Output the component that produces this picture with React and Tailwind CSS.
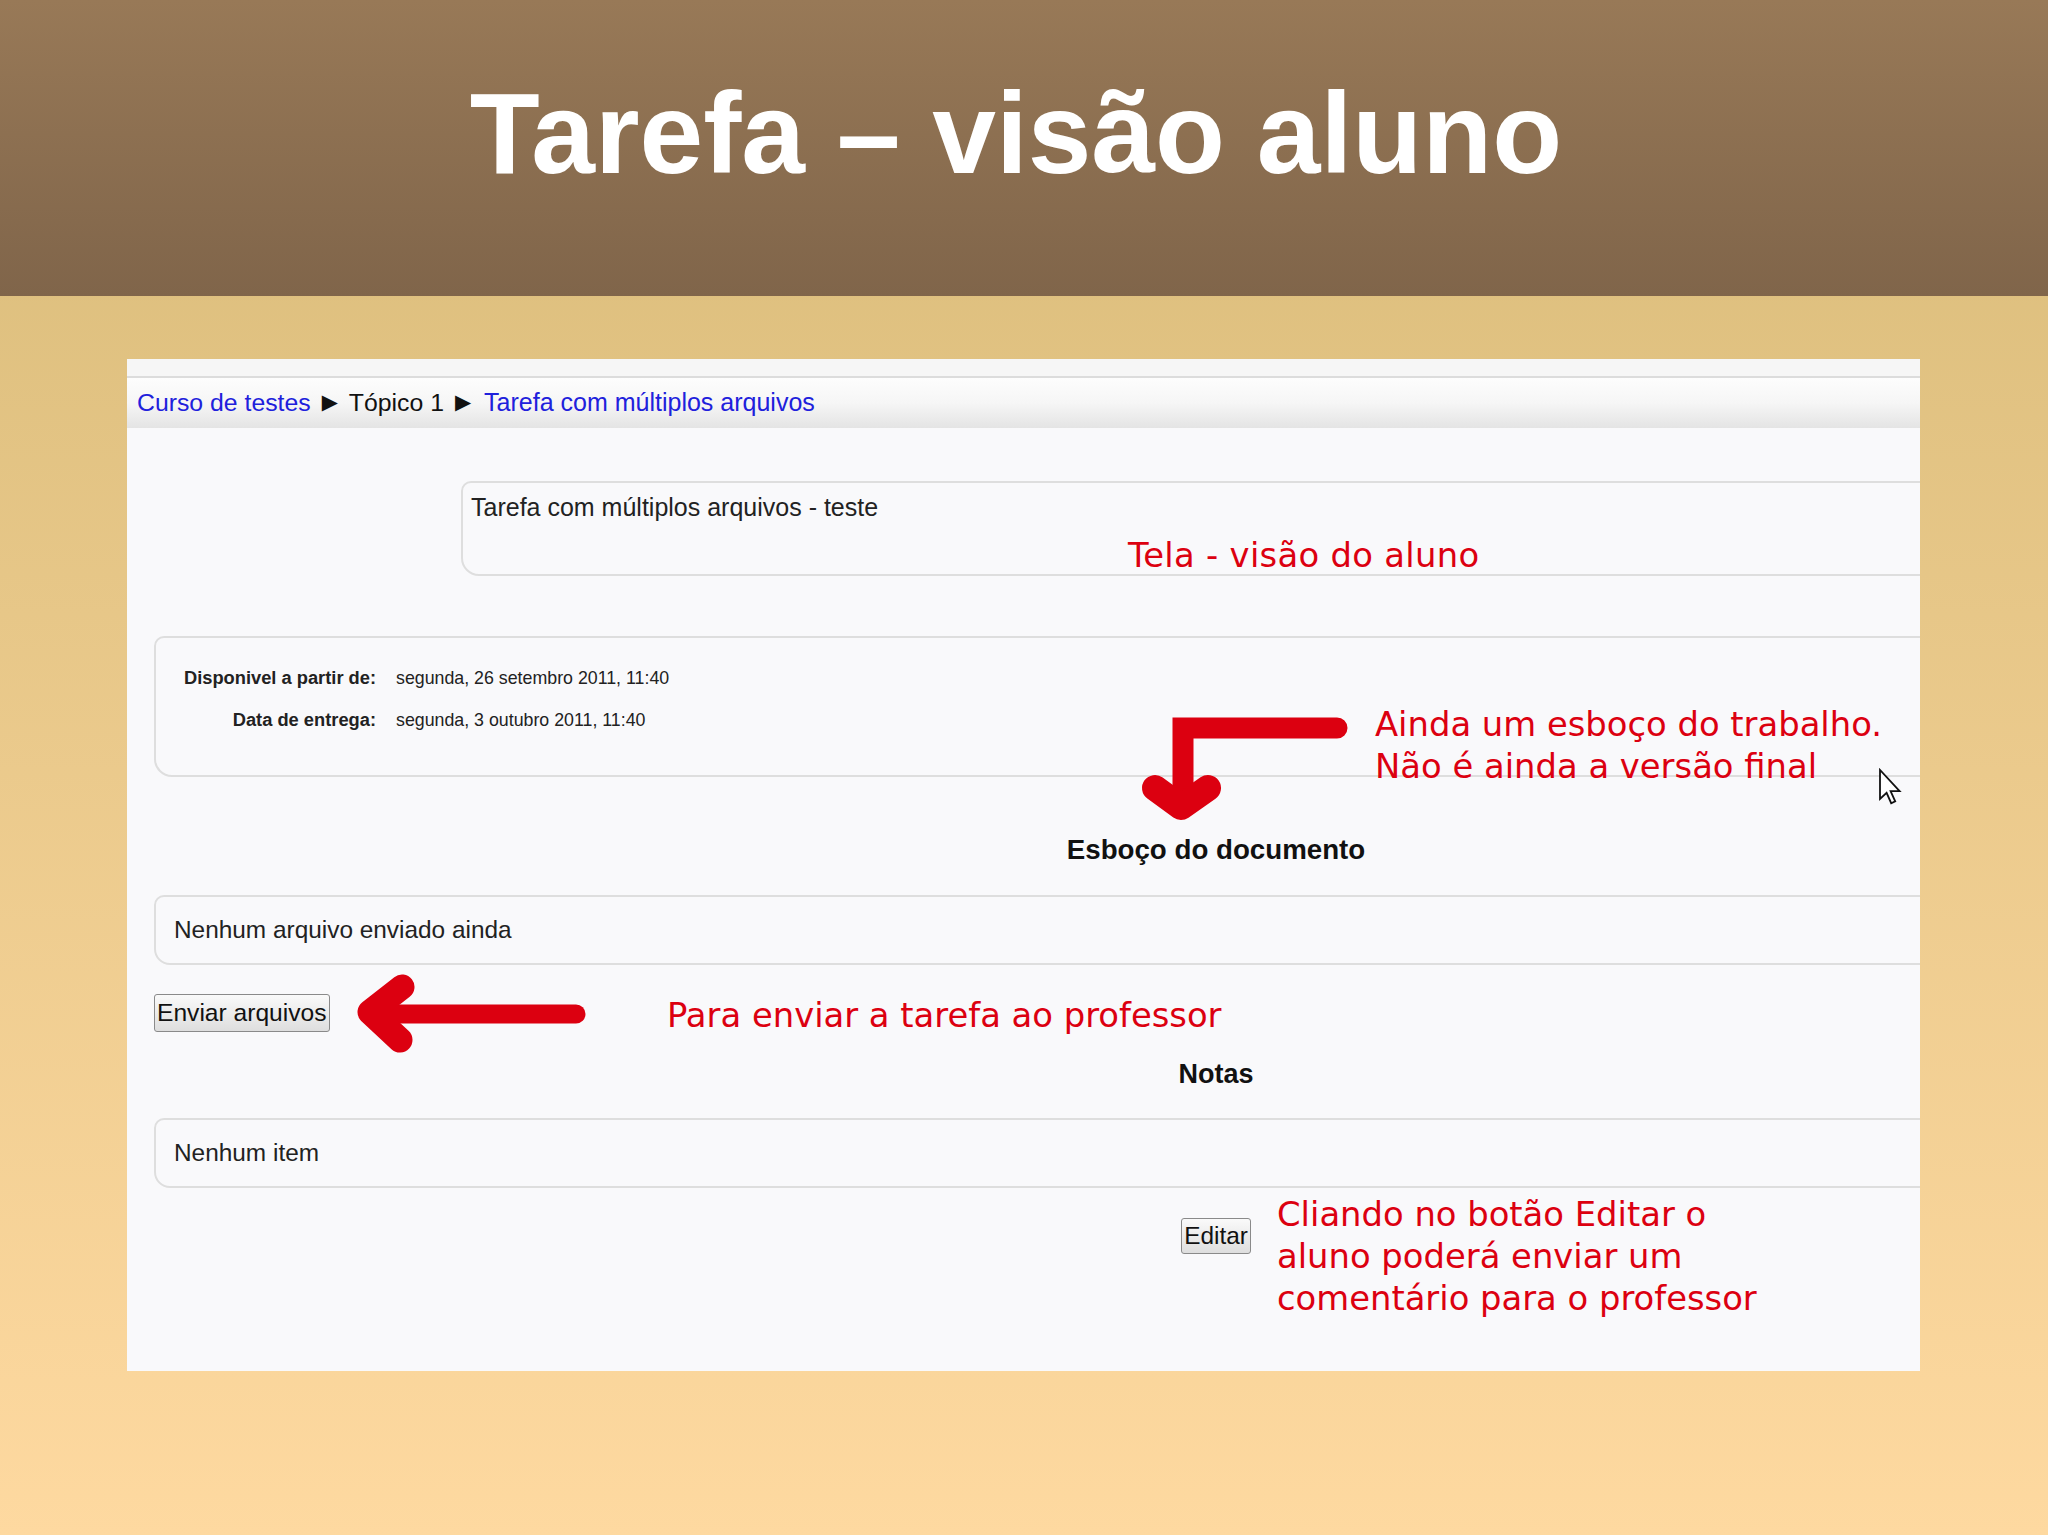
export default function App() {
  const sans = "font-['Liberation_Sans',Arial,sans-serif]";
  const red = "font-['DejaVu_Sans',sans-serif] text-[33.8px] leading-[42px] text-[#dc0010] whitespace-nowrap";

  return (
    <div className="w-[2048px] h-[1535px] flex flex-col bg-gradient-to-b from-[#d8bb78] to-[#fed9a0] overflow-hidden">
      {/* faixa do titulo */}
      <div className="h-[296px] shrink-0 bg-gradient-to-b from-[#987957] to-[#80654a] flex justify-center pt-[76px] pr-[16px]">
        <h1 className={`${sans} text-white font-bold text-[114.5px] leading-none`}>Tarefa – visão aluno</h1>
      </div>

      {/* captura de tela do moodle */}
      <div className="mt-[63px] ml-[127px] w-[1793px] h-[1012px] shrink-0 relative overflow-hidden bg-[#f9f9fb]">
        <div className={`${sans} w-[2178px] flex flex-col text-[#222]`}>
          <div className="h-[17px] bg-[#f6f6f6]" />
          <div className="h-[2px] bg-[#dcdcdc]" />
          <div className="h-[50px] bg-gradient-to-b from-[#fdfdfd] via-[#f6f6f6] to-[#e4e4e4] flex items-center pl-[10px] text-[24.8px]">
            <span className="text-[#2020dc]">Curso de testes</span>
            <span className="mx-[11px] text-[#111] text-[21px] font-['DejaVu_Sans']">▶</span>
            <span className="text-[#111]">Tópico 1</span>
            <span className="ml-[11px] mr-[13px] text-[#111] text-[21px] font-['DejaVu_Sans']">▶</span>
            <span className="text-[#2020dc] text-[25px]">Tarefa com múltiplos arquivos</span>
          </div>

          <div className="mt-[53px] mx-[334px] h-[95px] border-2 border-[#dedede] rounded-tl-[10px] rounded-bl-[18px] pl-[8px] pt-[10px] text-[25px] leading-[28px]">
            Tarefa com múltiplos arquivos - teste
          </div>

          <div className="mt-[60px] mx-[27px] h-[141px] border-2 border-[#dedede] rounded-tl-[10px] rounded-bl-[18px] pt-[19px] text-[17.8px] leading-[42px]">
            <div className="flex">
              <span className="w-[220px] text-right font-bold text-[18.3px]">Disponivel a partir de:</span>
              <span className="ml-[20px]">segunda, 26 setembro 2011, 11:40</span>
            </div>
            <div className="flex">
              <span className="w-[220px] text-right font-bold text-[18.3px]">Data de entrega:</span>
              <span className="ml-[20px]">segunda, 3 outubro 2011, 11:40</span>
            </div>
          </div>

          <h2 className="mt-[56px] text-center font-bold text-[27.7px] leading-[34px] text-[#111]">Esboço do documento</h2>

          <div className="mt-[28px] mx-[27px] h-[70px] border-2 border-[#dedede] rounded-tl-[10px] rounded-bl-[16px] flex items-center pl-[18px] text-[24.4px]">
            Nenhum arquivo enviado ainda
          </div>

          <div className="mt-[29px] ml-[27px]">
            <button className="h-[38px] px-[2px] border border-[#8a8a8a] rounded-[3px] bg-gradient-to-b from-[#fafafa] to-[#dedede] text-[24.6px] leading-none text-[#111]">
              Enviar arquivos
            </button>
          </div>

          <h2 className="mt-[25px] text-center font-bold text-[27px] leading-[34px] text-[#111]">Notas</h2>

          <div className="mt-[27px] mx-[27px] h-[70px] border-2 border-[#dedede] rounded-tl-[10px] rounded-bl-[16px] flex items-center pl-[18px] text-[24.4px]">
            Nenhum item
          </div>

          <div className="mt-[30px] flex justify-center">
            <button className="h-[36px] px-[2px] border border-[#8a8a8a] rounded-[3px] bg-gradient-to-b from-[#fafafa] to-[#dedede] text-[24.4px] leading-none text-[#111]">
              Editar
            </button>
          </div>
        </div>

        {/* anotacoes em vermelho */}
        <div className={`${red} absolute left-[1001px] top-[176px] tracking-[0.3px]`}>Tela - visão do aluno</div>

        <svg className="absolute left-[1003px] top-[346px]" width="230" height="125" viewBox="0 0 230 125">
          <path d="M207 23 L53 23 L53 92" fill="none" stroke="#dc0010" strokeWidth="21" strokeLinecap="round" strokeLinejoin="miter" />
          <path d="M25 83 L51 102 L78 83" fill="none" stroke="#dc0010" strokeWidth="26" strokeLinecap="round" strokeLinejoin="round" />
        </svg>

        <div className={`${red} absolute left-[1248px] top-[345px]`}>
          <div>Ainda um esboço do trabalho.</div>
          <div>Não é ainda a versão final</div>
        </div>

        <svg className="absolute left-[1751px] top-[409px]" width="26" height="38" viewBox="0 0 13 19">
          <path d="M1 1 L1 15.5 L4.3 12.4 L6.6 17.6 L8.6 16.7 L6.3 11.6 L10.8 11.6 Z" fill="#fff" stroke="#111" strokeWidth="0.9" strokeLinejoin="miter" />
        </svg>

        <svg className="absolute left-[218px] top-[606px]" width="250" height="95" viewBox="0 0 250 95">
          <path d="M40 49 L231 49" fill="none" stroke="#dc0010" strokeWidth="19" strokeLinecap="round" />
          <path d="M57 22 L25 47 L55 75" fill="none" stroke="#dc0010" strokeWidth="25" strokeLinecap="round" strokeLinejoin="round" />
        </svg>

        <div className={`${red} absolute left-[540px] top-[636px]`}>Para enviar a tarefa ao professor</div>

        <div className={`${red} absolute left-[1150px] top-[835px]`}>
          <div>Cliando no botão Editar o</div>
          <div>aluno poderá enviar um</div>
          <div>comentário para o professor</div>
        </div>
      </div>
    </div>
  );
}
